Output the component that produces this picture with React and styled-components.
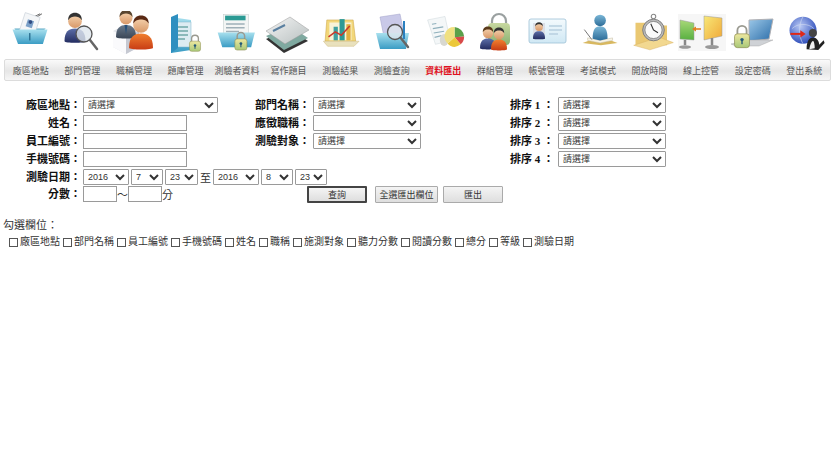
import React from 'react'
import styled, { createGlobalStyle } from 'styled-components'

const SERIF = `"Liberation Serif", "Noto Sans CJK TC", serif`
const SANS = `"Liberation Sans", "Noto Sans CJK TC", sans-serif`

const Global = createGlobalStyle`
  html, body { margin: 0; padding: 0; background: #fff; }
  body { font-family: ${SANS}; color: #222; }
`
const Page = styled.div`
  width: 836px;
  height: 469px;
  overflow: hidden;
`
const GradientDefs = styled.svg`
  display: block;
  width: 0;
  height: 0;
`
const IconRow = styled.div`
  display: grid;
  grid-template-columns: repeat(16, 1fr);
  width: 827px;
  margin-left: 4px;
  padding-top: 11px;
  height: 59px;
  box-sizing: border-box;
`
const IconCell = styled.div`
  display: flex;
  justify-content: center;
`
const Nav = styled.nav`
  display: grid;
  grid-template-columns: repeat(16, 1fr);
  width: 827px;
  height: 22px;
  margin-left: 4px;
  box-sizing: border-box;
  border: 1px solid #dcdcdc;
  border-radius: 2px;
  background: linear-gradient(#fafafa, #e6e6e6 55%, #f6f6f6);
`
const NavItem = styled.a`
  display: flex;
  align-items: center;
  justify-content: center;
  font-size: 9px;
  white-space: nowrap;
  color: ${p => (p.$active ? '#e01020' : '#555')};
  font-weight: ${p => (p.$active ? 700 : 400)};
`
const Form = styled.form`
  margin: 16px 0 0 8px;
  display: flex;
  flex-direction: column;
`
const FieldGrid = styled.div`
  display: grid;
  grid-template-columns: 75px 147px 83px 162px 83px 120px;
  grid-auto-rows: 18px;
  height: 71px;
`
const Label = styled.label`
  font-family: ${SERIF};
  font-weight: 700;
  font-size: 11px;
  line-height: 16px;
  height: 16px;
  text-align: right;
  padding-right: ${p => p.$pr || 2}px;
  white-space: nowrap;
  color: #111;
  flex: none;
  width: ${p => (p.$inline ? '73px' : 'auto')};
`
const Blank = styled.div`
  grid-column: span 2;
`
const Select = styled.select`
  display: block;
  box-sizing: border-box;
  width: ${p => p.$w}px;
  height: 16px;
  padding: 0;
  margin: 0;
  border: 1px solid #9a9a9a;
  border-radius: 1px;
  background: #fff;
  color: #333;
  font-family: ${SANS};
  font-size: 9px;
  flex: none;
`
const Input = styled.input`
  display: block;
  box-sizing: border-box;
  width: ${p => p.$w}px;
  height: 16px;
  margin: 0;
  padding: 0;
  border: 1px solid #9a9a9a;
  background: #fff;
  flex: none;
`
const Line = styled.div`
  display: flex;
  align-items: center;
  height: ${p => p.$h}px;
`
const DateFields = styled.div`
  display: flex;
  align-items: center;
  gap: 2px;
`
const Small = styled.span`
  font-family: ${SERIF};
  font-size: 11px;
  color: #333;
  flex: none;
`
const ScoreFields = styled.div`
  display: flex;
  align-items: center;
  width: 224px;
  flex: none;
`
const Buttons = styled.div`
  display: flex;
  align-items: center;
`
const Button = styled.button`
  box-sizing: border-box;
  width: ${p => p.$w}px;
  height: 17px;
  padding: 0;
  margin-right: ${p => p.$gap || 0}px;
  font-family: ${SANS};
  font-size: 9px;
  color: #333;
  background: linear-gradient(#f4f4f4, #dedede);
  border: ${p => (p.$primary ? '2px solid #444' : '1px solid #aaa')};
  border-radius: 1px;
`
const PickTitle = styled.div`
  margin: 15px 0 0 3px;
  font-size: 11px;
  line-height: 14px;
  color: #333;
`
const PickRow = styled.div`
  display: flex;
  margin: 3px 0 0 9px;
`
const Pick = styled.label`
  display: flex;
  align-items: center;
  font-size: 10px;
  line-height: 14px;
  color: #333;
  margin-right: 3px;
  white-space: nowrap;
`
const Check = styled.input`
  appearance: none;
  box-sizing: border-box;
  width: 9px;
  height: 9px;
  margin: 0 2px 0 0;
  border: 1px solid #555;
  background: #fff;
`

const Svg = ({ fit, children }) => (
  <svg width="50" height="44" viewBox="0 0 50 44"><g transform={fit}>{children}</g></svg>
)

const Person = ({ x, y, s = 1, hair = '#4a3a2a', suit = 'url(#gNavy)' }) => (
  <g transform={`translate(${x} ${y}) scale(${s})`}>
    <path d="M-10 24c0-9 4-12 10-12s10 3 10 12c0 2-20 2-20 0z" fill={suit} />
    <circle cx="0" cy="5" r="6.5" fill="url(#gSkin)" />
    <path d="M-6.5 4c0-5 3-7 6.500-7s6.500 2 6.500 7c-2-3-4-3.500-6.500-3.500S-4.500 1-6.500 4z" fill={hair} />
  </g>
)
const Lens = ({ x, y, r = 7, hx, hy }) => (
  <g>
    <line x1={x + r * 0.7} y1={y + r * 0.7} x2={hx} y2={hy} stroke="#666" strokeWidth="2.500" strokeLinecap="round" />
    <circle cx={x} cy={y} r={r} fill="#dfe6ee" fillOpacity=".8" stroke="#555" strokeWidth="1.300" />
  </g>
)
const Padlock = ({ x, y, s = 1 }) => (
  <g transform={`translate(${x} ${y}) scale(${s})`}>
    <path d="M-4 0v-4a4 4 0 0 1 8 0v4" fill="none" stroke="#9a9a90" strokeWidth="1.600" />
    <rect x="-6.500" y="-1" width="13" height="12" rx="2.500" fill="url(#gLock)" stroke="#8c8c50" strokeWidth=".6" />
    <circle cx="0" cy="4" r="1.500" fill="#245a78" />
    <rect x="-.6" y="4" width="1.200" height="4" fill="#245a78" />
  </g>
)

const icons = [
  <Svg key="0" fit="translate(2 0) scale(.92)">
    <path d="M24 9L36 3M27 10l11-7" stroke="#333" strokeWidth=".8" />
    <path d="M8 19h34l-3 3H10z" fill="#5ea9c6" />
    <g transform="rotate(18 25 15)">
      <rect x="16" y="4" width="17" height="22" fill="#f4f6f8" stroke="#b8c2cc" strokeWidth=".5" />
      <rect x="21" y="10" width="7" height="8" fill="#7ba0c8" />
      <circle cx="24.500" cy="12" r="2" fill="#304a80" />
    </g>
    <path d="M6 20h38l-5 16H12z" fill="url(#gBlue)" />
    <rect x="24" y="24" width="1.500" height="8" fill="#2a6f90" />
  </Svg>,
  <Svg key="1">
    <Person x={18} y={5} s={1.050} suit="url(#gNavy)" hair="#333" />
    <Lens x={27} y={23} r={8} hx={40} hy={38} />
  </Svg>,
  <Svg key="2">
    <path d="M5 20l12-6 14 6v16l-13 7-13-7z" fill="#e3e5ea" />
    <path d="M5 20l13 6v17l-13-7z" fill="#fafafc" />
    <path d="M18 26l13-6v16l-13 7z" fill="#c6c9d2" />
    <Person x={18} y={2} s={1} suit="url(#gSuit)" hair="#5a4630" />
    <path d="M16.500 14l1.500 9 1.500-9z" fill="#26507a" />
    <Person x={33} y={8} s={1.200} suit="url(#gOrange)" hair="#5a2a14" />
  </Svg>,
  <Svg key="3">
    <path d="M11 6l20 3v30l-20 3z" fill="url(#gBlue)" />
    <rect x="14" y="11" width="17" height="25" fill="#dcecf2" stroke="#7fb5cc" strokeWidth=".5" />
    <path d="M17 16h11M17 20h11M17 24h11M17 28h8" stroke="#6fa8a8" strokeWidth="1.600" />
    <path d="M11 6l7-3v34l-7 5z" fill="#2e8fc0" />
    <Padlock x={35} y={31} s={.85} />
  </Svg>,
  <Svg key="4" fit="translate(1 0) scale(.93)">
    <rect x="11" y="4" width="27" height="26" fill="#f3f5f4" stroke="#b9c4c4" strokeWidth=".5" />
    <rect x="13" y="5" width="22" height="5" fill="#2b9a94" />
    <path d="M14 14h20M14 18h20M14 22h14" stroke="#9fb0b8" strokeWidth="1.500" />
    <path d="M5 23h40l-4 16H10z" fill="url(#gBlue)" />
    <Padlock x={30} y={31} s={1} />
  </Svg>,
  <Svg key="5">
    <path d="M3 28l24-10 18 12-24 12z" fill="#333" />
    <path d="M3 25l24-10 18 12-24 12z" fill="#7fa9a0" />
    <path d="M3 20L27 6l19 13-24 14z" fill="url(#gGrey)" stroke="#999" strokeWidth=".5" />
    <path d="M10 20l12-6" stroke="#5a7fa0" strokeWidth="2" />
  </Svg>,
  <Svg key="6" fit="translate(5 3) scale(.85)">
    <path d="M8 7h31l3 25H6z" fill="#f2d77a" stroke="#c8a040" strokeWidth=".6" />
    <rect x="11" y="10" width="26" height="21" fill="#f8f3d8" />
    <rect x="16" y="15" width="5" height="16" fill="#3fa0a0" />
    <rect x="23" y="6" width="6" height="25" fill="#2e9a96" />
    <rect x="31" y="12" width="5" height="19" fill="#e0b040" />
    <path d="M10 27l8-6 7 4 10-11" fill="none" stroke="#c8382a" strokeWidth="1.800" />
    <path d="M4 32h42l-6 6H9z" fill="#e9e1bd" stroke="#c8b070" strokeWidth=".5" />
  </Svg>,
  <Svg key="7" fit="translate(3 0)">
    <path d="M10 6l20-3 5 24-20 4z" fill="#c9c9e8" stroke="#a0a0c8" strokeWidth=".5" />
    <path d="M6 22h33l-3 16H10z" fill="url(#gBlue)" />
    <rect x="33" y="10" width="2" height="18" fill="#2a80c0" />
    <Lens x={25} y={21} r={7.500} hx={38} hy={36} />
  </Svg>,
  <Svg key="8" fit="translate(7 2) scale(.87)">
    <path d="M3 8l20-4 6 28-17 4z" fill="#f4f7f8" stroke="#c6d0d6" strokeWidth=".5" />
    <path d="M8 13l5-1M9 18l12-2M10 23l12-2M11 28l8-2" stroke="#8fb0bc" strokeWidth="1.300" />
    <ellipse cx="22" cy="31" rx="5" ry="7" fill="#d8d8d0" />
    <path d="M34 28V16a12 12 0 0 1 11 11z" fill="#5aa04a" />
    <path d="M34 28l11-1a12 12 0 0 1-4 9z" fill="#d84a4a" />
    <path d="M34 28l7 8a12 12 0 0 1-7 3 11 11 0 0 1-8-4z" fill="#ecc83a" />
    <path d="M34 28l-8 7a11 11 0 0 1 8-19z" fill="#f0e080" />
  </Svg>,
  <Svg key="9">
    <path d="M22 14v-4a7 7 0 0 1 14 0v4" fill="none" stroke="#9aa0a0" strokeWidth="2.200" />
    <rect x="18" y="12" width="22" height="22" rx="4" fill="url(#gGreen)" />
    <Person x={18} y={18} s={.8} suit="url(#gNavy)" hair="#5a3a1a" />
    <Person x={29} y={19} s={.8} suit="url(#gOrange)" hair="#333" />
  </Svg>,
  <Svg key="10">
    <rect x="7" y="8" width="37" height="24" rx="2" fill="url(#gCard)" stroke="#9cc0d6" strokeWidth=".8" />
    <rect x="11" y="12" width="12" height="14" fill="#dcdfe6" />
    <Person x={17} y={13} s={.6} suit="url(#gNavy)" hair="#333" />
    <path d="M27 15h13M27 19h13M27 23h9" stroke="#b8cfe0" strokeWidth="1.300" />
  </Svg>,
  <Svg key="11" fit="translate(8 2) scale(.83)">
    <path d="M2 36l8-3 13 2 13-2 8 3-20 3z" fill="#d8b860" />
    <path d="M8 33l15 3 15-3v-3l-15 3-15-3z" fill="#f8f4e8" stroke="#b8b090" strokeWidth=".5" />
    <path d="M14 31c0-11 3-15 9-15s9 4 9 15l-9 2z" fill="url(#gSteel)" />
    <circle cx="23" cy="9" r="7" fill="url(#gSteel)" />
    <line x1="4" y1="20" x2="13" y2="32" stroke="#777" strokeWidth="1.200" />
  </Svg>,
  <Svg key="12" fit="translate(6 1) scale(.9)">
    <path d="M5 12h16l3 3h16v22H5z" fill="#eac872" />
    <path d="M3 37l28-9 16 6-26 8z" fill="#f2d890" stroke="#d8b060" strokeWidth=".5" />
    <circle cx="25" cy="5" r="2.500" fill="none" stroke="#888" strokeWidth="1.200" />
    <circle cx="25" cy="20" r="12" fill="#bbb" stroke="#777" strokeWidth="1" />
    <circle cx="25" cy="20" r="9.500" fill="#fafafa" stroke="#555" strokeWidth=".6" />
    <path d="M25 20l-3-7M25 20l5 3" stroke="#333" strokeWidth="1.200" />
  </Svg>,
  <Svg key="13">
    <rect x="1" y="3" width="48" height="37" fill="#f6f6f6" />
    <path d="M3 9l14 3v17L3 28z" fill="url(#gGreen2)" stroke="#999" strokeWidth=".5" />
    <path d="M27 5l18 2v18l-18 4z" fill="url(#gYellow)" stroke="#999" strokeWidth=".5" />
    <path d="M24 18h-8" stroke="#e08020" strokeWidth="1.600" />
    <path d="M15 18l4-2.500v5z" fill="#e08020" />
    <path d="M8 29v5M35 27v7" stroke="#888" strokeWidth="2.500" />
    <ellipse cx="8" cy="36" rx="6" ry="1.800" fill="#999" />
    <ellipse cx="35" cy="36" rx="7" ry="2" fill="#999" />
  </Svg>,
  <Svg key="14">
    <path d="M21 9l24-1-4 20-20 2z" fill="url(#gScreen)" stroke="#b0b0b4" strokeWidth="1" />
    <path d="M3 33l18-4 24 0-14 6H8z" fill="#cfd2d6" stroke="#a0a0a0" strokeWidth=".4" />
    <Padlock x={14} y={24} s={1.150} />
  </Svg>,
  <Svg key="15" fit="translate(5 4) scale(.9)">
    <circle cx="20" cy="17" r="15" fill="url(#gGlobe)" />
    <path d="M8 15c6-6 18-6 24 0M20 2c-5 8-5 22 0 30" fill="none" stroke="#cfd8f0" strokeWidth=".7" />
    <path d="M6 21h13" stroke="#e02818" strokeWidth="2.200" />
    <path d="M17 17l6 4-6 4z" fill="#e02818" />
    <circle cx="31" cy="20" r="4.500" fill="#444" />
    <path d="M24 38c0-9 3-13 7-13s7 4 7 8l5-5 1 3-7 8z" fill="#222" />
    <path d="M27 38c1-6 3-9 4-9s2 3 2 8z" fill="#f2f2f2" />
  </Svg>,
]

const NAV = ['廠區地點', '部門管理', '職稱管理', '題庫管理', '測驗者資料', '寫作題目', '測驗結果', '測驗查詢', '資料匯出', '群組管理', '帳號管理', '考試模式', '開放時間', '線上控管', '設定密碼', '登出系統']
const PICKS = ['廠區地點', '部門名稱', '員工編號', '手機號碼', '姓名', '職稱', '施測對象', '聽力分數', '閱讀分數', '總分', '等級', '測驗日期']

const Choose = ({ w = 108 }) => (
  <Select $w={w}><option>請選擇</option></Select>
)
const DateSelect = ({ w, value }) => (
  <Select $w={w}><option>{value}</option></Select>
)

const App = () => (
  <Page>
    <Global />
    <GradientDefs aria-hidden="true">
      <defs>
        <linearGradient id="gBlue" x1="0" y1="0" x2="0" y2="1"><stop offset="0" stopColor="#a8e0ee" /><stop offset="1" stopColor="#3a9cc4" /></linearGradient>
        <linearGradient id="gNavy" x1="0" y1="0" x2="0" y2="1"><stop offset="0" stopColor="#5c6ea8" /><stop offset="1" stopColor="#232c60" /></linearGradient>
        <linearGradient id="gSuit" x1="0" y1="0" x2="0" y2="1"><stop offset="0" stopColor="#6a7a8c" /><stop offset="1" stopColor="#3a4656" /></linearGradient>
        <linearGradient id="gSkin" x1="0" y1="0" x2="0" y2="1"><stop offset="0" stopColor="#f6d4b0" /><stop offset="1" stopColor="#d89868" /></linearGradient>
        <linearGradient id="gOrange" x1="0" y1="0" x2="0" y2="1"><stop offset="0" stopColor="#f08030" /><stop offset="1" stopColor="#c83c14" /></linearGradient>
        <linearGradient id="gLock" x1="0" y1="0" x2="0" y2="1"><stop offset="0" stopColor="#eee8a0" /><stop offset="1" stopColor="#a8c878" /></linearGradient>
        <linearGradient id="gGrey" x1="0" y1="0" x2="1" y2="1"><stop offset="0" stopColor="#f4f4f4" /><stop offset="1" stopColor="#b8c0c0" /></linearGradient>
        <linearGradient id="gGreen" x1="0" y1="0" x2="0" y2="1"><stop offset="0" stopColor="#c8d8a0" /><stop offset="1" stopColor="#88b070" /></linearGradient>
        <linearGradient id="gGreen2" x1="0" y1="0" x2="0" y2="1"><stop offset="0" stopColor="#a8d878" /><stop offset="1" stopColor="#58b040" /></linearGradient>
        <linearGradient id="gYellow" x1="0" y1="0" x2="1" y2="1"><stop offset="0" stopColor="#f8e878" /><stop offset="1" stopColor="#f0a838" /></linearGradient>
        <linearGradient id="gCard" x1="0" y1="0" x2="0" y2="1"><stop offset="0" stopColor="#f4fafd" /><stop offset="1" stopColor="#d0e8f4" /></linearGradient>
        <linearGradient id="gSteel" x1="0" y1="0" x2="0" y2="1"><stop offset="0" stopColor="#7cb8d8" /><stop offset="1" stopColor="#2c6c98" /></linearGradient>
        <linearGradient id="gScreen" x1="0" y1="0" x2="1" y2="1"><stop offset="0" stopColor="#9cc8e8" /><stop offset="1" stopColor="#2a6ca8" /></linearGradient>
        <radialGradient id="gGlobe" cx=".4" cy=".35" r=".7"><stop offset="0" stopColor="#b8c8f4" /><stop offset="1" stopColor="#2848b8" /></radialGradient>
      </defs>
    </GradientDefs>
    <IconRow>
      {icons.map((icon, i) => <IconCell key={i}>{icon}</IconCell>)}
    </IconRow>
    <Nav>
      {NAV.map(name => <NavItem key={name} $active={name === '資料匯出'}>{name}</NavItem>)}
    </Nav>
    <Form>
      <FieldGrid>
        <Label>廠區地點：</Label>
        <Choose w={135} />
        <Label $pr={3}>部門名稱：</Label>
        <Choose />
        <Label $pr={4}>排序 1 ：</Label>
        <Choose />

        <Label>姓名：</Label>
        <Input $w={104} />
        <Label $pr={3}>應徵職稱：</Label>
        <Select $w={108}><option></option></Select>
        <Label $pr={4}>排序 2 ：</Label>
        <Choose />

        <Label>員工編號：</Label>
        <Input $w={104} />
        <Label $pr={3}>測驗對象：</Label>
        <Choose />
        <Label $pr={4}>排序 3 ：</Label>
        <Choose />

        <Label>手機號碼：</Label>
        <Input $w={104} />
        <Blank />
        <Label $pr={4}>排序 4 ：</Label>
        <Choose />
      </FieldGrid>
      <Line $h={17}>
        <Label $inline>測驗日期：</Label>
        <DateFields>
          <DateSelect w={46} value="2016" />
          <DateSelect w={32} value="7" />
          <DateSelect w={33} value="23" />
          <Small>至</Small>
          <DateSelect w={46} value="2016" />
          <DateSelect w={32} value="8" />
          <DateSelect w={32} value="23" />
        </DateFields>
      </Line>
      <Line $h={18}>
        <Label $inline>分數：</Label>
        <ScoreFields>
          <Input $w={34} />
          <Small>～</Small>
          <Input $w={34} />
          <Small>分</Small>
        </ScoreFields>
        <Buttons>
          <Button type="button" $w={60} $gap={8} $primary>查詢</Button>
          <Button type="button" $w={63} $gap={5}>全選匯出欄位</Button>
          <Button type="button" $w={60}>匯出</Button>
        </Buttons>
      </Line>
    </Form>
    <PickTitle>勾選欄位：</PickTitle>
    <PickRow>
      {PICKS.map(name => (
        <Pick key={name}><Check type="checkbox" />{name}</Pick>
      ))}
    </PickRow>
  </Page>
)

export default App
